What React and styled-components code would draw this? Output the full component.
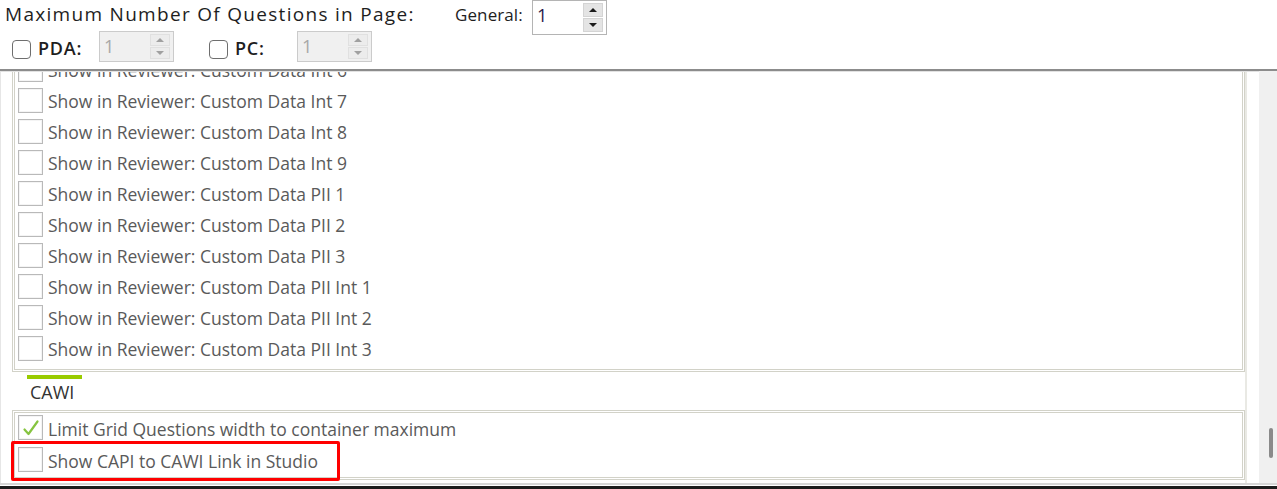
import React from "react";
import styled, { createGlobalStyle } from "styled-components";

const GlobalStyle = createGlobalStyle`
  html, body { margin: 0; padding: 0; background: #ffffff; overflow: hidden; }
  body { font-family: "Open Sans", "Noto Sans", sans-serif; }
  * { box-sizing: border-box; }
`;

const Frame = styled.div`
  width: 1277px;
  height: 489px;
  display: flex;
  flex-direction: column;
  background: #ffffff;
`;

const Header = styled.div`
  height: 71px;
  flex: none;
  display: flex;
  flex-direction: column;
  padding-bottom: 7px;
  border-bottom: 2px solid #8c8c8c;
`;

const HeaderRow = styled.div`
  height: 31px;
  display: flex;
  align-items: ${(p) => (p.$top ? "flex-start" : "center")};
  padding-left: ${(p) => p.$pl}px;
`;

const Title = styled.div`
  width: 450px;
  flex: none;
  font-size: 19px;
  line-height: 28px;
  color: #1e1e1e;
  letter-spacing: 1.3px;
`;

const GeneralLabel = styled.div`
  width: 77px;
  flex: none;
  font-size: 17px;
  line-height: 29px;
  color: #1e1e1e;
  letter-spacing: 0.1px;
`;

const CheckLabel = styled.div`
  width: ${(p) => p.$w}px;
  flex: none;
  font-size: 18px;
  line-height: 31px;
  padding-top: 3px;
  color: #1e1e1e;
  font-weight: 600;
  letter-spacing: 0.8px;
`;

const RoundCheck = styled.span`
  width: 19px;
  height: 19px;
  flex: none;
  margin-top: 5px;
  border: 1px solid #6e6e6e;
  border-radius: 4px;
  background: #ffffff;
  margin-right: 7px;
`;

const Spin = styled.div`
  width: 75px;
  height: ${(p) => p.$h}px;
  flex: none;
  display: flex;
  border: 1px solid ${(p) => (p.$disabled ? "#cbcbcb" : "#b4b4b4")};
  background: ${(p) => (p.$disabled ? "#f0f0f0" : "#ffffff")};
  padding: 2px 3px 2px 4px;
`;

const SpinValue = styled.div`
  flex: 1;
  font-size: 18px;
  line-height: 24px;
  color: ${(p) => (p.$disabled ? "#a8a8a8" : "#2a1a4a")};
`;

const SpinButtons = styled.div`
  width: 20px;
  display: flex;
  flex-direction: column;
  gap: 1px;
`;

const SpinButton = styled.div`
  flex: 1;
  display: flex;
  align-items: center;
  justify-content: center;
  background: ${(p) => (p.$disabled ? "#ececec" : "#e4e4e4")};
  border: 1px solid ${(p) => (p.$disabled ? "#e0e0e0" : "#d4d4d4")};
`;

const Arrow = styled.span`
  width: 0;
  height: 0;
  border-left: 4px solid transparent;
  border-right: 4px solid transparent;
  ${(p) => (p.$down ? "border-top" : "border-bottom")}: 4px solid
    ${(p) => (p.$disabled ? "#a0a0a0" : "#1a1a1a")};
`;

const GroupGap = styled.div`
  width: ${(p) => p.$w}px;
  flex: none;
`;

const Main = styled.div`
  flex: 1;
  display: flex;
  min-height: 0;
`;

const Viewport = styled.div`
  flex: 1;
  display: flex;
  flex-direction: column;
  justify-content: flex-end;
  overflow: hidden;
  border-top: 1px solid #e2e2e2;
`;

const Content = styled.div`
  width: 1247px;
  padding: 0 0 3px 11px;
  border-left: 1px solid #e6e6e6;
  border-right: 2px solid #e9e9e4;
  display: flex;
  flex-direction: column;
`;

const Box = styled.div`
  border: 3px double #d2d2c8;
  padding: 0 0 ${(p) => p.$pb}px 3px;
  display: flex;
  flex-direction: column;
`;

const Row = styled.div`
  height: ${(p) => p.$h}px;
  display: flex;
  align-items: center;
  position: relative;
`;

const SquareCheck = styled.span`
  width: 25px;
  height: 25px;
  flex: none;
  border: 1px solid #b9b9b9;
  box-shadow: inset 0 0 0 1px #f4f4f4;
  background: #ffffff;
  margin-right: 5px;
  margin-bottom: ${(p) => (p.$raised ? 3 : 0)}px;
  display: flex;
  align-items: center;
  justify-content: center;
`;

const RowText = styled.span`
  font-size: 17.5px;
  color: #5a5a5a;
  white-space: nowrap;
`;

const Highlight = styled.div`
  position: absolute;
  left: -7px;
  top: -4px;
  width: 329px;
  height: 40px;
  border: 3px solid #ff0000;
  border-radius: 2px;
  pointer-events: none;
`;

const SectionHeader = styled.div`
  height: 38px;
  padding-left: 15px;
  display: flex;
  flex-direction: column;
`;

const SectionBar = styled.div`
  width: 55px;
  height: 4px;
  margin-top: 3px;
  background: #99cc00;
`;

const SectionTitle = styled.div`
  padding-left: 3px;
  font-size: 18px;
  line-height: 26px;
  color: #333333;
`;

const Scrollbar = styled.div`
  width: 18px;
  flex: none;
  background: #f0f0f0;
  display: flex;
  flex-direction: column;
  justify-content: flex-end;
  padding: 0 5px 25px 10px;
`;

const Thumb = styled.div`
  width: 4px;
  height: 30px;
  border-radius: 2px;
  background: #8a8a8a;
`;

const Footer = styled.div`
  height: 6px;
  flex: none;
  border-top: 2px solid #d6d6d6;
  border-bottom: 3px solid #1c1c1c;
  background: #ffffff;
`;

function SpinBox({ value, disabled, h }) {
  return (
    <Spin $disabled={disabled} $h={h}>
      <SpinValue $disabled={disabled}>{value}</SpinValue>
      <SpinButtons>
        <SpinButton $disabled={disabled}>
          <Arrow $disabled={disabled} />
        </SpinButton>
        <SpinButton $disabled={disabled}>
          <Arrow $down $disabled={disabled} />
        </SpinButton>
      </SpinButtons>
    </Spin>
  );
}

const CheckMark = () => (
  <svg width="18" height="18" viewBox="0 0 18 18">
    <path d="M2.5 10.5 L6.5 15 L15.5 2.5" fill="none" stroke="#86c440" strokeWidth="2.2" strokeLinecap="round" strokeLinejoin="round" />
  </svg>
);

const reviewerItems = [
  "Custom Data Int 6",
  "Custom Data Int 7",
  "Custom Data Int 8",
  "Custom Data Int 9",
  "Custom Data PII 1",
  "Custom Data PII 2",
  "Custom Data PII 3",
  "Custom Data PII Int 1",
  "Custom Data PII Int 2",
  "Custom Data PII Int 3",
];

export default function App() {
  return (
    <>
      <GlobalStyle />
      <Frame>
        <Header>
          <HeaderRow $top $pl={5}>
            <Title>Maximum Number Of Questions in Page:</Title>
            <GeneralLabel>General:</GeneralLabel>
            <SpinBox value="1" h={35} />
          </HeaderRow>
          <HeaderRow $pl={12}>
            <RoundCheck />
            <CheckLabel $w={61}>PDA:</CheckLabel>
            <SpinBox value="1" disabled h={31} />
            <GroupGap $w={35} />
            <RoundCheck />
            <CheckLabel $w={62}>PC:</CheckLabel>
            <SpinBox value="1" disabled h={31} />
          </HeaderRow>
        </Header>
        <Main>
          <Viewport>
            <Content>
              <Box $pb={5}>
                {reviewerItems.map((item) => (
                  <Row key={item} $h={31}>
                    <SquareCheck />
                    <RowText>Show in Reviewer: {item}</RowText>
                  </Row>
                ))}
              </Box>
              <SectionHeader>
                <SectionBar />
                <SectionTitle>CAWI</SectionTitle>
              </SectionHeader>
              <Box $pb={0}>
                <Row $h={32}>
                  <SquareCheck $raised>
                    <CheckMark />
                  </SquareCheck>
                  <RowText>Limit Grid Questions width to container maximum</RowText>
                </Row>
                <Row $h={32}>
                  <SquareCheck $raised />
                  <RowText>Show CAPI to CAWI Link in Studio</RowText>
                  <Highlight />
                </Row>
              </Box>
            </Content>
          </Viewport>
          <Scrollbar>
            <Thumb />
          </Scrollbar>
        </Main>
        <Footer />
      </Frame>
    </>
  );
}
